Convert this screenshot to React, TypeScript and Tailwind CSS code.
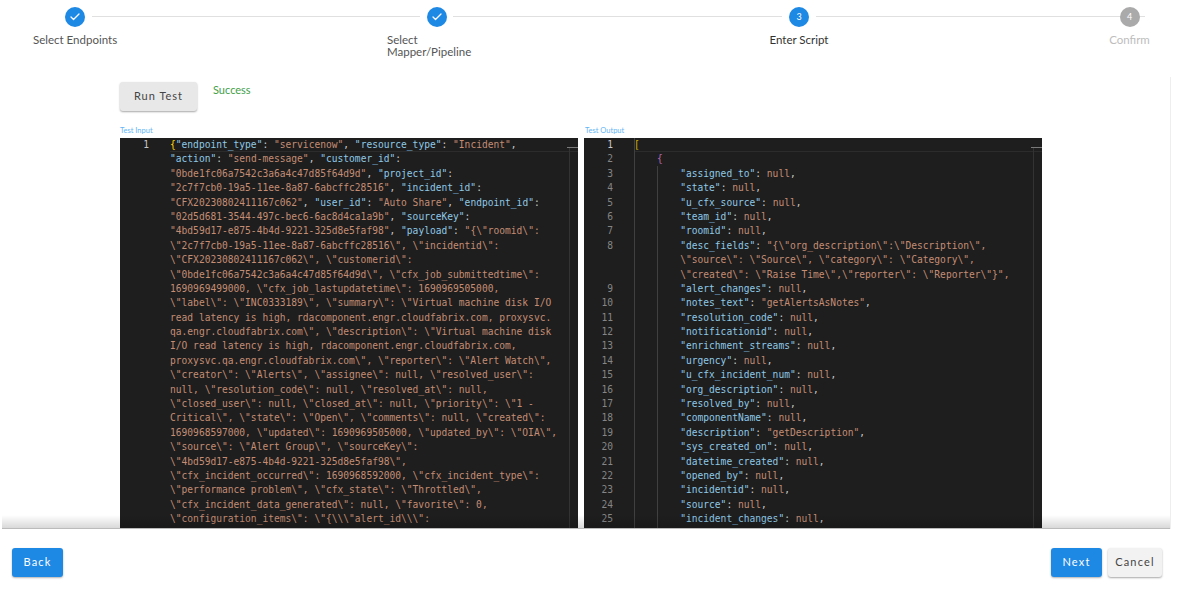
import React from "react";
import { Check } from "lucide-react";

type CodeLine = { n?: number; level?: number; a?: string; b?: string; open?: string };

const inputLines: CodeLine[] = [
  { n: 1, open: "{", a: '"endpoint_type": "servicenow", "resource_type": "Incident",' },
  { a: '"action": "send-message", "customer_id":' },
  { a: '"0bde1fc06a7542c3a6a4c47d85f64d9d", "project_id":' },
  { a: '"2c7f7cb0-19a5-11ee-8a87-6abcffc28516", "incident_id":' },
  { a: '"CFX20230802411167c062", "user_id": "Auto Share", "endpoint_id":' },
  { a: '"02d5d681-3544-497c-bec6-6ac8d4ca1a9b", "sourceKey":' },
  { a: '"4bd59d17-e875-4b4d-9221-325d8e5faf98", "payload": ', b: '"{\\"roomid\\":' },
  { b: '\\"2c7f7cb0-19a5-11ee-8a87-6abcffc28516\\", \\"incidentid\\":' },
  { b: '\\"CFX20230802411167c062\\", \\"customerid\\":' },
  { b: '\\"0bde1fc06a7542c3a6a4c47d85f64d9d\\", \\"cfx_job_submittedtime\\":' },
  { b: '1690969499000, \\"cfx_job_lastupdatetime\\": 1690969505000,' },
  { b: '\\"label\\": \\"INC0333189\\", \\"summary\\": \\"Virtual machine disk I/O' },
  { b: "read latency is high, rdacomponent.engr.cloudfabrix.com, proxysvc." },
  { b: 'qa.engr.cloudfabrix.com\\", \\"description\\": \\"Virtual machine disk' },
  { b: "I/O read latency is high, rdacomponent.engr.cloudfabrix.com," },
  { b: 'proxysvc.qa.engr.cloudfabrix.com\\", \\"reporter\\": \\"Alert Watch\\",' },
  { b: '\\"creator\\": \\"Alerts\\", \\"assignee\\": null, \\"resolved_user\\":' },
  { b: 'null, \\"resolution_code\\": null, \\"resolved_at\\": null,' },
  { b: '\\"closed_user\\": null, \\"closed_at\\": null, \\"priority\\": \\"1 -' },
  { b: 'Critical\\", \\"state\\": \\"Open\\", \\"comments\\": null, \\"created\\":' },
  { b: '1690968597000, \\"updated\\": 1690969505000, \\"updated_by\\": \\"OIA\\",' },
  { b: '\\"source\\": \\"Alert Group\\", \\"sourceKey\\":' },
  { b: '\\"4bd59d17-e875-4b4d-9221-325d8e5faf98\\",' },
  { b: '\\"cfx_incident_occurred\\": 1690968592000, \\"cfx_incident_type\\":' },
  { b: '\\"performance problem\\", \\"cfx_state\\": \\"Throttled\\",' },
  { b: '\\"cfx_incident_data_generated\\": null, \\"favorite\\": 0,' },
  { b: '\\"configuration_items\\": \\"{\\\\\\"alert_id\\\\\\":' },
];

const outputLines: CodeLine[] = [
  { n: 1, open: "[" },
  { n: 2, level: 1, open: "{" },
  { n: 3, level: 2, a: '"assigned_to": null,' },
  { n: 4, level: 2, a: '"state": null,' },
  { n: 5, level: 2, a: '"u_cfx_source": null,' },
  { n: 6, level: 2, a: '"team_id": null,' },
  { n: 7, level: 2, a: '"roomid": null,' },
  { n: 8, level: 2, a: '"desc_fields": ', b: '"{\\"org_description\\":\\"Description\\",' },
  { level: 2, b: '\\"source\\": \\"Source\\", \\"category\\": \\"Category\\",' },
  { level: 2, b: '\\"created\\": \\"Raise Time\\",\\"reporter\\": \\"Reporter\\"}",' },
  { n: 9, level: 2, a: '"alert_changes": null,' },
  { n: 10, level: 2, a: '"notes_text": "getAlertsAsNotes",' },
  { n: 11, level: 2, a: '"resolution_code": null,' },
  { n: 12, level: 2, a: '"notificationid": null,' },
  { n: 13, level: 2, a: '"enrichment_streams": null,' },
  { n: 14, level: 2, a: '"urgency": null,' },
  { n: 15, level: 2, a: '"u_cfx_incident_num": null,' },
  { n: 16, level: 2, a: '"org_description": null,' },
  { n: 17, level: 2, a: '"resolved_by": null,' },
  { n: 18, level: 2, a: '"componentName": null,' },
  { n: 19, level: 2, a: '"description": "getDescription",' },
  { n: 20, level: 2, a: '"sys_created_on": null,' },
  { n: 21, level: 2, a: '"datetime_created": null,' },
  { n: 22, level: 2, a: '"opened_by": null,' },
  { n: 23, level: 2, a: '"incidentid": null,' },
  { n: 24, level: 2, a: '"source": null,' },
  { n: 25, level: 2, a: '"incident_changes": null,' },
];

// keys blue, values orange, punctuation left plain
function Tokens({ text }: { text: string }) {
  const parts = text.split(/("[^"]*"(?=:)|"[^"]*"|null)/g);
  return (
    <>
      {parts.map((part, i) => {
        if (!part) return null;
        const isKey = part.startsWith('"') && text.slice(parts.slice(0, i + 1).join("").length).startsWith(":");
        if (isKey) return <span key={i} className="text-[#8fc9e6]">{part}</span>;
        if (part.startsWith('"') || part === "null") return <span key={i} className="text-[#c48d74]">{part}</span>;
        return <span key={i}>{part}</span>;
      })}
    </>
  );
}

function Editor({ lines, guides }: { lines: CodeLine[]; guides?: boolean }) {
  return (
    <div className="relative h-[391px] w-[458px] overflow-hidden bg-[#1e1e1e] font-['DejaVu_Sans_Mono',monospace] text-[9.6px] leading-[14.4px] text-[#c8c8c8]">
      {/* current line */}
      <div className="absolute left-[50px] right-0 top-0 h-[14.4px] border-b border-[#2c2c2c]" />
      {lines.map((line, i) => (
        <div key={i} className="flex h-[14.4px] whitespace-pre">
          <div className={`w-[29px] shrink-0 text-right ${line.n === 1 ? "text-[#c6c6c6]" : "text-[#858585]"}`}>
            {line.n ?? ""}
          </div>
          <div
            className={`ml-[21px] ${line.level === 2 ? "pl-[46.2px]" : line.level === 1 ? "pl-[23.1px]" : ""}`}
          >
            {line.open === "[" && <span className="text-[#d4b000]">[</span>}
            {line.open === "{" && (
              <span className={line.level === 1 ? "text-[#b565b0]" : "text-[#ffd700]"}>{"{"}</span>
            )}
            {line.a && <Tokens text={line.a} />}
            {line.b && <span className="text-[#c48d74]">{line.b}</span>}
          </div>
        </div>
      ))}
      {guides && (
        <>
          <div className="absolute bottom-0 left-[50px] top-0 w-px bg-[#404040]" />
          <div className="absolute bottom-0 left-[73px] top-[28px] w-px bg-[#404040]" />
        </>
      )}
      {/* overview ruler */}
      <div className="absolute bottom-0 right-[8px] top-[9px] w-px bg-[#333333]" />
      <div className="absolute right-0 top-[9px] h-px w-[11px] bg-[#7a7a7a]" />
    </div>
  );
}

function StepCircle({ children, color }: { children: React.ReactNode; color: string }) {
  return (
    <div
      className={`relative z-10 mx-auto flex h-5 w-5 items-center justify-center rounded-full text-[9px] text-white ${color}`}
    >
      {children}
    </div>
  );
}

export default function App() {
  return (
    <div className="flex h-[597px] w-[1186px] flex-col overflow-hidden bg-white font-['Lato',sans-serif]">
      {/* stepper */}
      <div className="flex h-[77px] shrink-0 pl-[33px] pt-[7px] text-[11.5px] leading-[12px]">
        <div className="w-[84px] shrink-0">
          <StepCircle color="bg-[#1e88e5]">
            <Check size={12} strokeWidth={2.5} />
          </StepCircle>
          <div className="mt-[7px] whitespace-nowrap text-[#555555]">Select Endpoints</div>
        </div>
        <div className="mb-auto -ml-[25px] -mr-[33px] mt-[9px] h-px w-[328px] shrink-0 bg-[#e0e0e0]" />
        <div className="w-[100px] shrink-0">
          <StepCircle color="bg-[#1e88e5]">
            <Check size={12} strokeWidth={2.5} />
          </StepCircle>
          <div className="mt-[7px] w-[90px] text-[#555555]">Select Mapper/Pipeline</div>
        </div>
        <div className="mb-auto -ml-[34px] -mr-[13px] mt-[9px] h-px w-[329px] shrink-0 bg-[#e0e0e0]" />
        <div className="w-[60px] shrink-0">
          <StepCircle color="bg-[#1e88e5]">3</StepCircle>
          <div className="mt-[7px] whitespace-nowrap text-center text-[#333333]">Enter Script</div>
        </div>
        <div className="mb-auto -ml-[13px] -mr-[36px] mt-[9px] h-px w-[329px] shrink-0 bg-[#e0e0e0]" />
        <div className="w-[41px] shrink-0">
          <StepCircle color="bg-[#aaaaaa]">4</StepCircle>
          <div className="mt-[7px] text-center text-[#bdbdbd]">Confirm</div>
        </div>
      </div>

      {/* test panel */}
      <div className="relative ml-[2px] h-[452px] w-[1169px] shrink-0 overflow-hidden border-r border-[#eeeeee] pl-[118px] pt-[5px]">
        <div className="flex items-start">
          <button className="h-[29px] w-[77px] rounded-[3px] bg-[#e8e8e8] text-[11px] tracking-[1px] text-[#444444] shadow-[0_1px_2px_rgba(0,0,0,0.35)]">
            Run Test
          </button>
          <div className="ml-[16px] text-[11px] leading-[16px] text-[#43a047]">Success</div>
        </div>
        <div className="mt-[15px] flex gap-[6px]">
          <div className="w-[458px]">
            <div className="h-[10px] text-[7.5px] leading-[10px] text-[#64b5f6]">Test Input</div>
            <div className="mt-[2px]">
              <Editor lines={inputLines} />
            </div>
          </div>
          <div className="w-[458px]">
            <div className="h-[10px] pl-px text-[7.5px] leading-[10px] text-[#64b5f6]">Test Output</div>
            <div className="mt-[2px]">
              <Editor lines={outputLines} guides />
            </div>
          </div>
        </div>
        {/* fade over the bottom edge */}
        <div className="absolute inset-x-0 bottom-0 h-[14px] border-b border-[#bbbbbb] bg-gradient-to-b from-transparent to-black/15" />
      </div>

      {/* footer */}
      <div className="flex flex-1 items-start justify-between pl-[12px] pr-[24px] pt-[19px] text-[11px] tracking-[1.2px]">
        <button className="h-[29px] w-[51px] rounded-[3px] bg-[#1e88e5] text-white shadow-[0_1px_2px_rgba(0,0,0,0.3)]">
          Back
        </button>
        <div className="flex gap-[6px]">
          <button className="h-[29px] w-[51px] rounded-[3px] bg-[#1e88e5] text-white shadow-[0_1px_2px_rgba(0,0,0,0.3)]">
            Next
          </button>
          <button className="h-[29px] w-[54px] rounded-[3px] bg-[#f2f2f2] text-[#444444] shadow-[0_1px_2px_rgba(0,0,0,0.35)]">
            Cancel
          </button>
        </div>
      </div>
    </div>
  );
}
